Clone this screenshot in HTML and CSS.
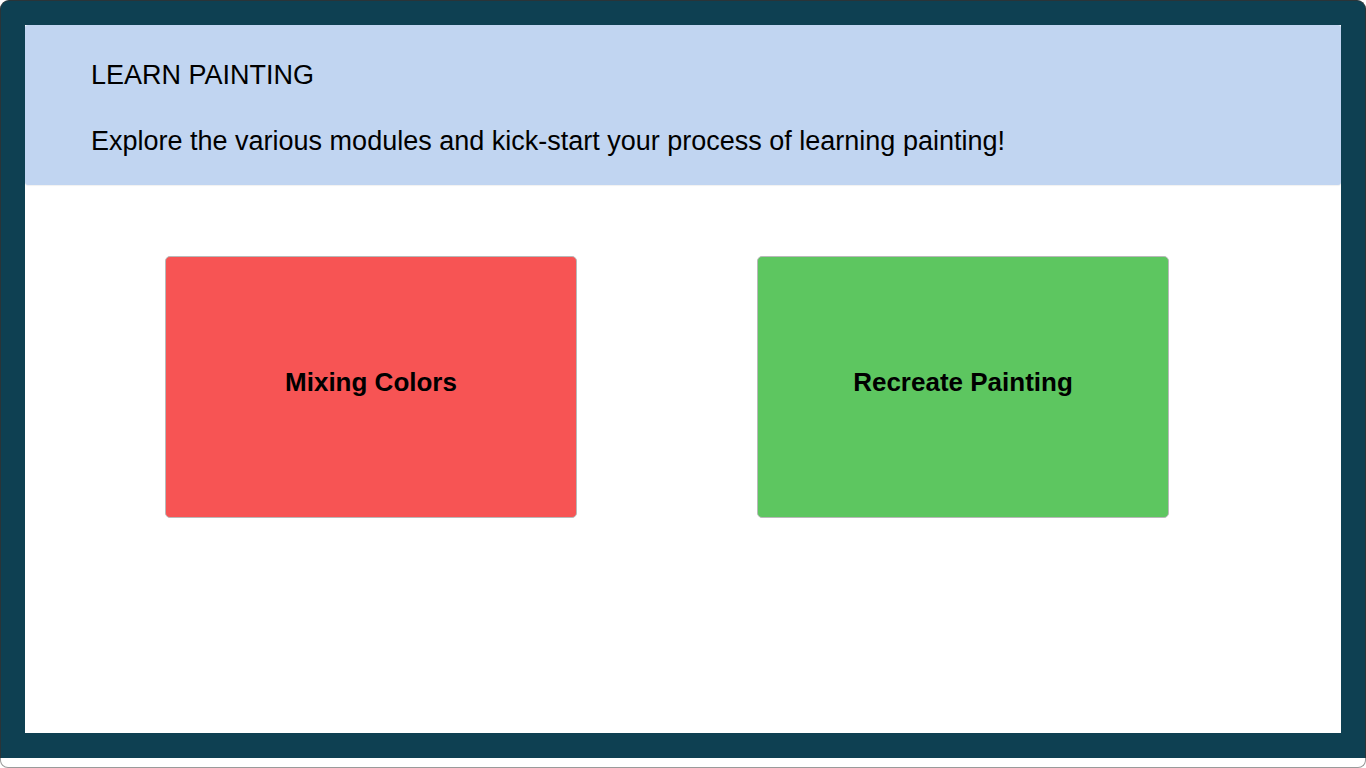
FILE: index.html
```html
<!DOCTYPE html>
<html lang="en">
<head>
<meta charset="utf-8">
<title>Learn Painting</title>
<link rel="stylesheet" href="styles.css">
</head>
<body>
<div class="window">
  <div class="page">
    <header class="hero">
      <p class="hero-title">LEARN PAINTING</p>
      <p class="hero-sub">Explore the various modules and kick-start your process of learning painting!</p>
    </header>
    <main class="modules">
      <a class="card card-red" href="#">Mixing Colors</a>
      <a class="card card-green" href="#">Recreate Painting</a>
    </main>
  </div>
</div>
<div class="statusbar"></div>
</body>
</html>
```

FILE: styles.css
```css
html, body {
  margin: 0;
  padding: 0;
  background: #ffffff;
  font-family: "Liberation Sans", Arial, sans-serif;
}

.window {
  height: 758px;
  box-sizing: border-box;
  padding: 25px;
  background: #0e4052;
  border-radius: 9px 9px 0 0;
  border-top: 1px solid #2a3438;
  border-left: 1px solid #2a3438;
  border-right: 1px solid #2a3438;
}

.page {
  height: 708px;
  margin-top: -1px;
  margin-left: -1px;
  margin-right: -1px;
  background: #ffffff;
}

.hero {
  height: 160px;
  box-sizing: border-box;
  background: #c1d5f1;
  border-radius: 3px;
  box-shadow: 0 1px 1px rgba(0, 0, 0, 0.06);
  padding: 35px 0 0 66px;
  color: #000;
}

.hero-title,
.hero-sub {
  margin: 0;
  font-size: 27px;
  line-height: 31px;
}

.hero-sub {
  margin-top: 35px;
}

.modules {
  display: grid;
  grid-template-columns: 412px 412px;
  column-gap: 180px;
  padding: 71px 0 0 140px;
}

.card {
  height: 262px;
  box-sizing: border-box;
  border: 1px solid #b9b9b9;
  border-radius: 5px;
  display: flex;
  align-items: center;
  justify-content: center;
  padding-bottom: 10px;
  font-size: 26px;
  font-weight: bold;
  color: #000;
  text-decoration: none;
}

.card-red {
  background: #f75454;
}

.card-green {
  background: #5dc660;
}

.statusbar {
  height: 9px;
  background: #ffffff;
  border: 1px solid #9a9a9a;
  border-top: none;
  border-radius: 0 0 8px 8px;
}
```
